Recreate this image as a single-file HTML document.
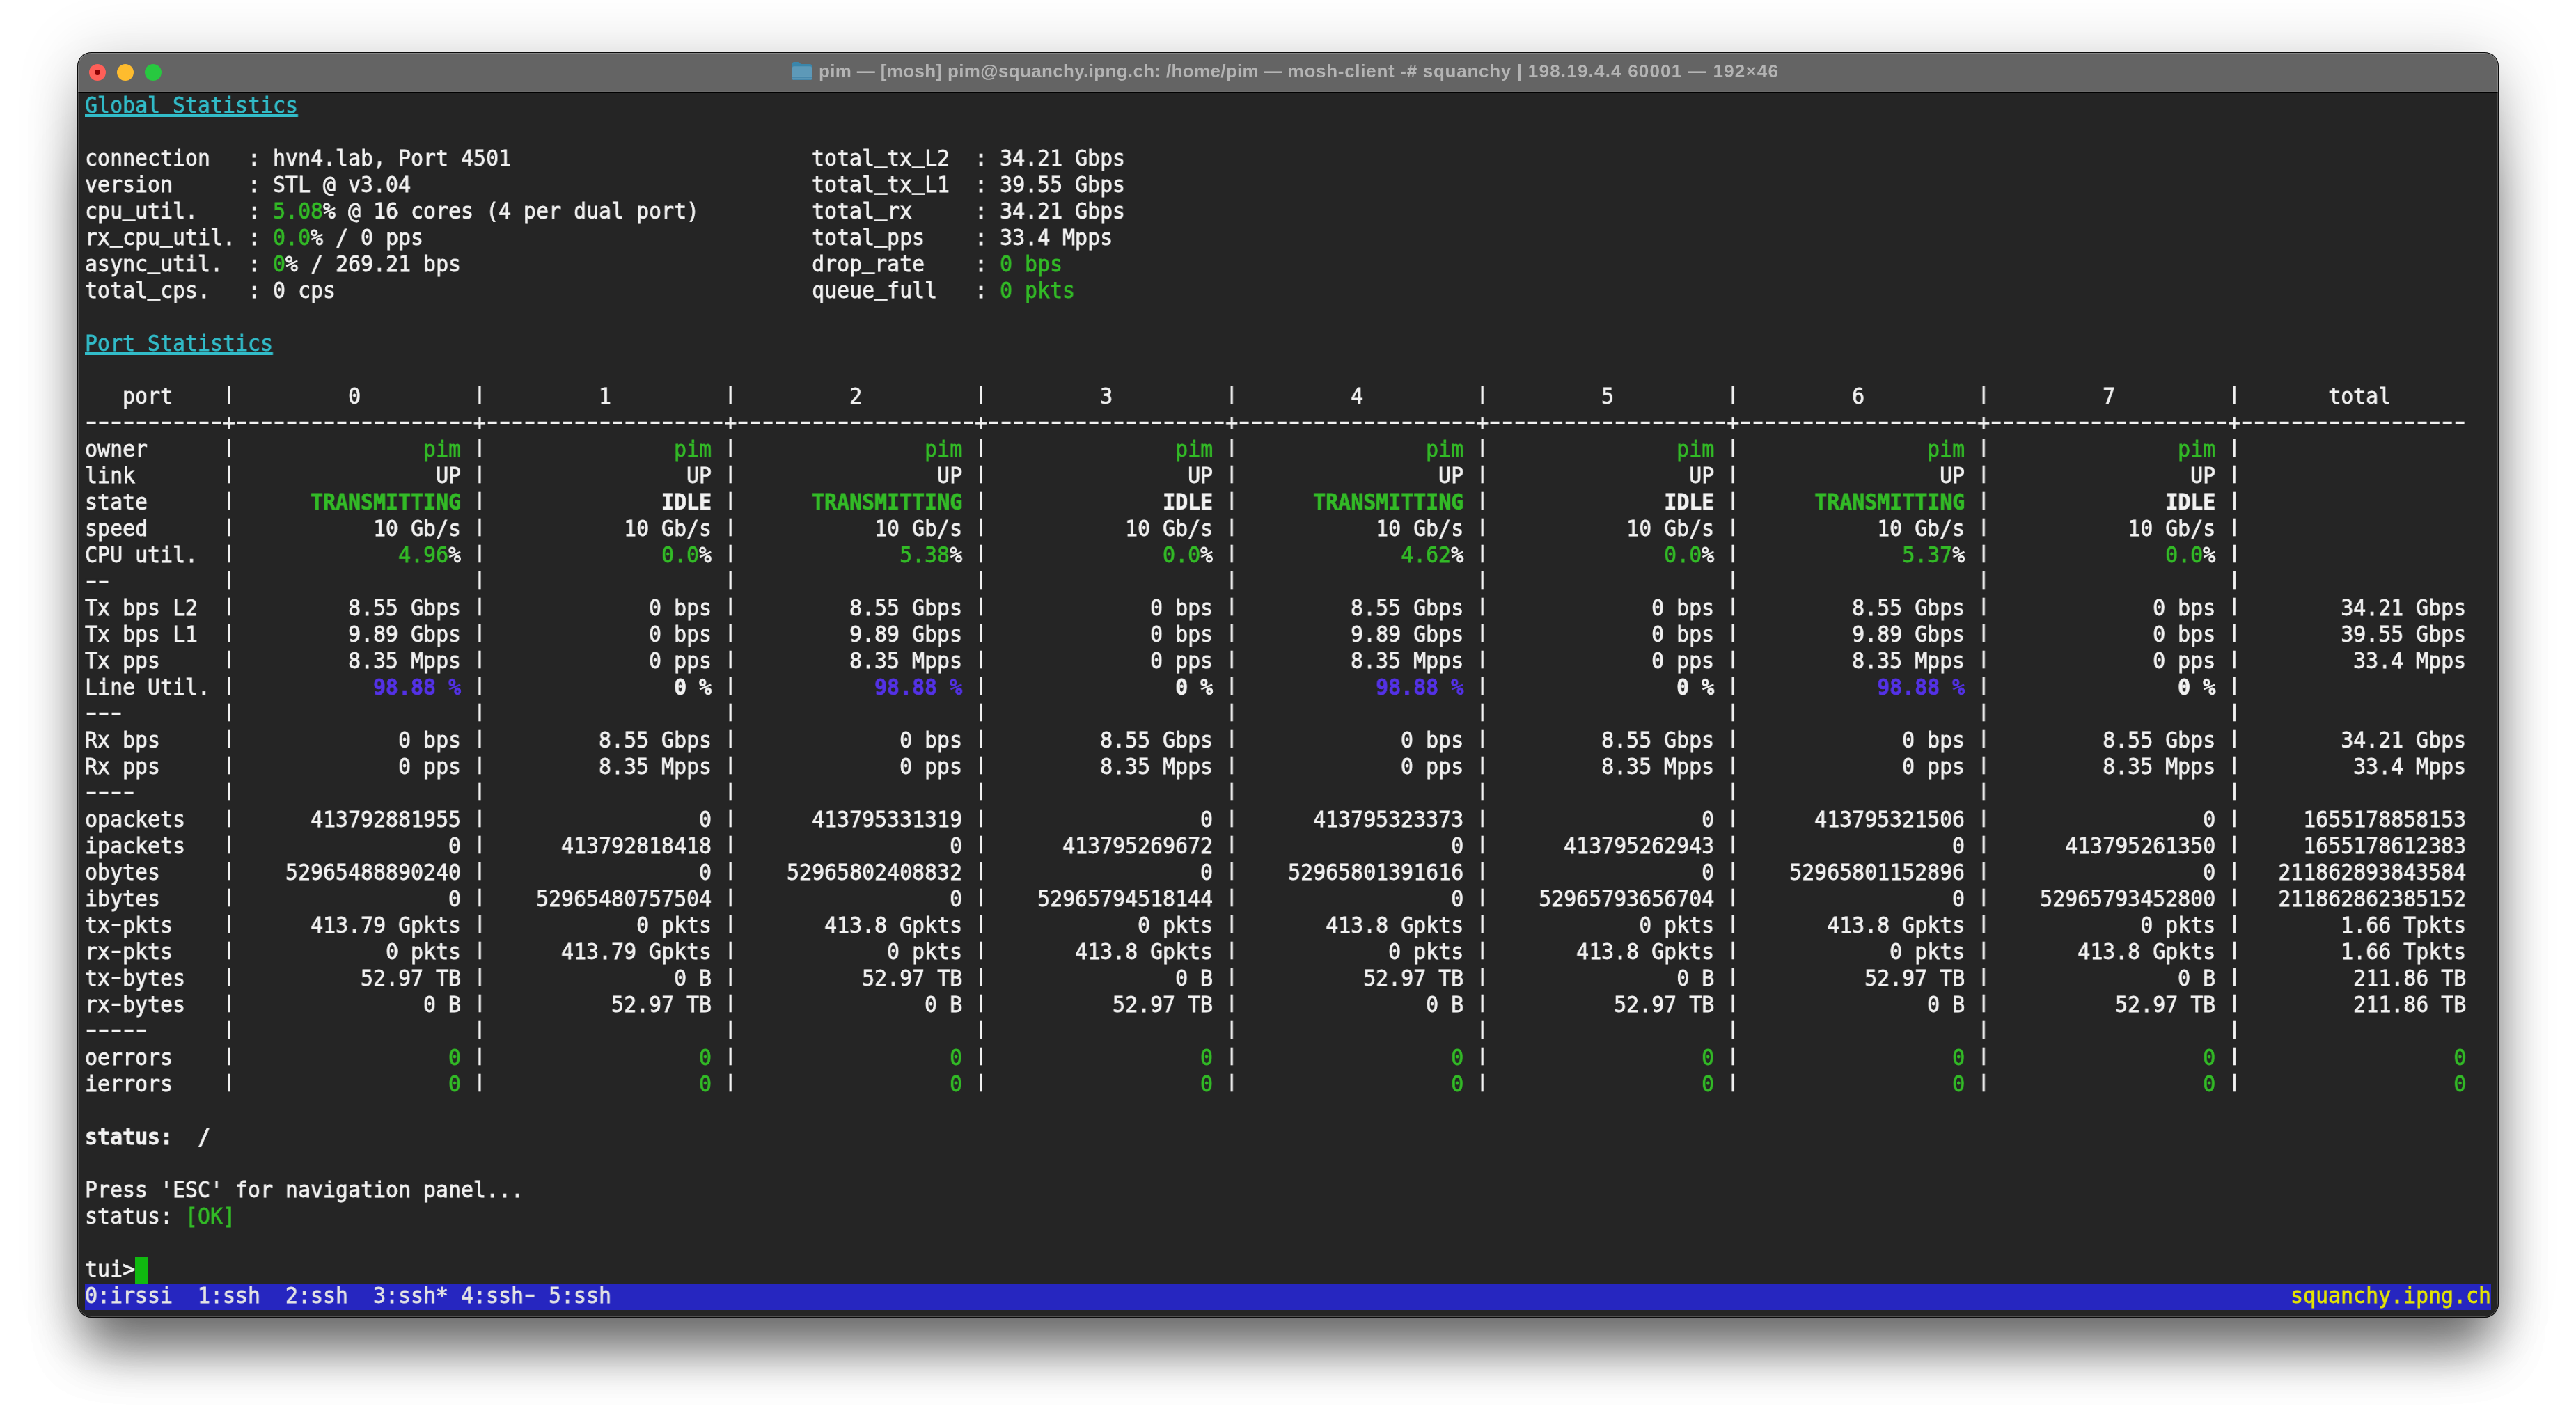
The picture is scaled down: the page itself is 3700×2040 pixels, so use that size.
<!DOCTYPE html>
<html lang="en"><head><meta charset="utf-8"><title>trex tui</title>
<style>
html,body{margin:0;padding:0;}
body{width:3700px;height:2040px;background:#fff;position:relative;overflow:hidden;}
#shadow{position:absolute;left:111px;top:75px;width:3478px;height:1818px;border-radius:20px;
  box-shadow:0 0 90px 0 rgba(0,0,0,.15);}
#k1,#k2{position:absolute;left:123px;width:3454px;border-radius:20px;box-shadow:0 50px 76px 0 rgba(0,0,0,.34);}
#k1{top:80px;height:1805px;} #k2{top:180px;height:1705px;}
#win{position:absolute;left:111px;top:75px;width:3478px;height:1818px;border-radius:20px;
  background:#252525;overflow:hidden;box-sizing:border-box;}
#edge{position:absolute;left:0;top:0;right:0;bottom:0;border-radius:20px;border:1px solid #0a0a0a;
  box-shadow:inset 0 0 0 1px rgba(255,255,255,.20);box-sizing:border-box;z-index:5;pointer-events:none;}
#tbar{position:absolute;left:0;top:0;width:100%;height:57px;background:#646464;border-bottom:1px solid #000;box-shadow:inset 0 -1px 0 #6b6b6b;}
#tbar i{position:absolute;top:17px;width:24px;height:24px;border-radius:50%;display:block;}
#r{left:17px;background:#fe5f58;} #y{left:57px;background:#febc2e;} #g{left:97px;background:#28c840;}
#r::after{content:"";position:absolute;left:8px;top:8px;width:8px;height:8px;border-radius:50%;background:#8c0003;}
#title{position:absolute;left:1065px;will-change:transform;top:0;height:56px;line-height:55px;white-space:pre;
  font:bold 26px/55px "Liberation Sans",sans-serif;color:#b4b4b4;}
#folder{position:absolute;left:1026px;top:13px;width:30px;height:28px;}
#bar{position:absolute;left:11px;top:1769px;width:3456px;height:38px;background:#2626c0;}
#cur{position:absolute;left:83px;top:1731px;width:18px;height:38px;background:#10b910;}
#term{position:absolute;left:11px;top:57px;margin:0;width:3816.8px;
  font-family:"DejaVu Sans Mono", "Liberation Mono", monospace;font-size:32.5px;line-height:38px;letter-spacing:0;color:#f2f2f2;white-space:pre;
  font-variant-ligatures:none;font-kerning:none;-webkit-text-stroke:0.8px;will-change:transform;
  transform:scaleX(0.919934);transform-origin:0 0;}
.g{color:#33bb27;} .c{color:#32bcc9;} .bl{color:#5432e6;} .y{color:#e5e500;} .s{color:#e4e4e4;}
.b{font-weight:bold;}
#term i{font-style:normal;display:inline-block;transform:translateY(-3.9px) scaleY(0.766);}
#term s{text-decoration:none;position:relative;top:-4.3px;-webkit-text-stroke:1.3px;}
#term u{text-decoration:none;font-size:63.38px;letter-spacing:-18.5883px;line-height:0;-webkit-text-stroke:2px #252525;position:relative;top:6.7px;left:-9.294px;}
#term .s u{-webkit-text-stroke:2px #2626c0;}
.u{text-decoration:underline;text-decoration-thickness:4px;text-underline-offset:2px;text-decoration-skip-ink:none;}
</style></head>
<body>
<div id="shadow"></div><div id="k1"></div><div id="k2"></div>
<div id="win">
<div id="tbar"><i id="r"></i><i id="y"></i><i id="g"></i><svg id="folder" viewBox="0 0 30 28">
<path d="M1 3.5Q1 1 3.5 1H9Q10.3 1 11.3 1.9L13.5 4H26.5Q29 4 29 6.5V24.5Q29 27 26.5 27H3.5Q1 27 1 24.5Z" fill="#3a86ab"/>
<path d="M1 9.5Q1 7.3 3.2 7.3H26.8Q29 7.3 29 9.5V24.5Q29 27 26.5 27H3.5Q1 27 1 24.5Z" fill="#5d99b8"/>
<path d="M1 21.6H29V24.5Q29 27 26.5 27H3.5Q1 27 1 24.5Z" fill="#4888ab"/>
<rect x="1" y="21.4" width="28" height=".9" fill="#6aa2be"/>
<rect x="1" y="24" width="28" height=".9" fill="#5c98b7"/>
</svg><div id="title"><span style="letter-spacing:.34px">pim — [mosh] pim@squanchy.ipng.ch: /home/pim — </span><span style="letter-spacing:.72px">mosh-client -# squanchy | </span><span style="letter-spacing:1.2px">198.19.4.4 60001 — 192×46</span></div></div>
<div id="bar"></div><div id="cur"></div>
<pre id="term"><span class="c u">Global Statistics</span>

connection   : hvn4.lab, Port 4501                        total<s>_</s>tx<s>_</s>L2  : 34.21 Gbps
version      : STL @ v3.04                                total<s>_</s>tx<s>_</s>L1  : 39.55 Gbps
cpu<s>_</s>util.    : <span class="g">5.08</span>% @ 16 cores (4 per dual port)         total<s>_</s>rx     : 34.21 Gbps
rx<s>_</s>cpu<s>_</s>util. : <span class="g">0.0</span>% / 0 pps                               total<s>_</s>pps    : 33.4 Mpps
async<s>_</s>util.  : <span class="g">0</span>% / 269.21 bps                            drop<s>_</s>rate    : <span class="g">0 bps</span>
total<s>_</s>cps.   : 0 cps                                      queue<s>_</s>full   : <span class="g">0 pkts</span>

<span class="c u">Port Statistics</span>

   port    <i>|</i>         0         <i>|</i>         1         <i>|</i>         2         <i>|</i>         3         <i>|</i>         4         <i>|</i>         5         <i>|</i>         6         <i>|</i>         7         <i>|</i>       total
<u>-----------</u>+<u>-------------------</u>+<u>-------------------</u>+<u>-------------------</u>+<u>-------------------</u>+<u>-------------------</u>+<u>-------------------</u>+<u>-------------------</u>+<u>-------------------</u>+<u>------------------</u>
owner      <i>|</i>               <span class="g">pim</span> <i>|</i>               <span class="g">pim</span> <i>|</i>               <span class="g">pim</span> <i>|</i>               <span class="g">pim</span> <i>|</i>               <span class="g">pim</span> <i>|</i>               <span class="g">pim</span> <i>|</i>               <span class="g">pim</span> <i>|</i>               <span class="g">pim</span> <i>|</i>
link       <i>|</i>                UP <i>|</i>                UP <i>|</i>                UP <i>|</i>                UP <i>|</i>                UP <i>|</i>                UP <i>|</i>                UP <i>|</i>                UP <i>|</i>
state      <i>|</i>      <span class="g b">TRANSMITTING</span> <i>|</i>              <span class="b">IDLE</span> <i>|</i>      <span class="g b">TRANSMITTING</span> <i>|</i>              <span class="b">IDLE</span> <i>|</i>      <span class="g b">TRANSMITTING</span> <i>|</i>              <span class="b">IDLE</span> <i>|</i>      <span class="g b">TRANSMITTING</span> <i>|</i>              <span class="b">IDLE</span> <i>|</i>
speed      <i>|</i>           10 Gb/s <i>|</i>           10 Gb/s <i>|</i>           10 Gb/s <i>|</i>           10 Gb/s <i>|</i>           10 Gb/s <i>|</i>           10 Gb/s <i>|</i>           10 Gb/s <i>|</i>           10 Gb/s <i>|</i>
CPU util.  <i>|</i>             <span class="g">4.96</span>% <i>|</i>              <span class="g">0.0</span>% <i>|</i>             <span class="g">5.38</span>% <i>|</i>              <span class="g">0.0</span>% <i>|</i>             <span class="g">4.62</span>% <i>|</i>              <span class="g">0.0</span>% <i>|</i>             <span class="g">5.37</span>% <i>|</i>              <span class="g">0.0</span>% <i>|</i>
<u>--</u>         <i>|</i>                   <i>|</i>                   <i>|</i>                   <i>|</i>                   <i>|</i>                   <i>|</i>                   <i>|</i>                   <i>|</i>                   <i>|</i>
Tx bps L2  <i>|</i>         8.55 Gbps <i>|</i>             0 bps <i>|</i>         8.55 Gbps <i>|</i>             0 bps <i>|</i>         8.55 Gbps <i>|</i>             0 bps <i>|</i>         8.55 Gbps <i>|</i>             0 bps <i>|</i>        34.21 Gbps
Tx bps L1  <i>|</i>         9.89 Gbps <i>|</i>             0 bps <i>|</i>         9.89 Gbps <i>|</i>             0 bps <i>|</i>         9.89 Gbps <i>|</i>             0 bps <i>|</i>         9.89 Gbps <i>|</i>             0 bps <i>|</i>        39.55 Gbps
Tx pps     <i>|</i>         8.35 Mpps <i>|</i>             0 pps <i>|</i>         8.35 Mpps <i>|</i>             0 pps <i>|</i>         8.35 Mpps <i>|</i>             0 pps <i>|</i>         8.35 Mpps <i>|</i>             0 pps <i>|</i>         33.4 Mpps
Line Util. <i>|</i>           <span class="bl b">98.88 %</span> <i>|</i>               <span class="b">0 %</span> <i>|</i>           <span class="bl b">98.88 %</span> <i>|</i>               <span class="b">0 %</span> <i>|</i>           <span class="bl b">98.88 %</span> <i>|</i>               <span class="b">0 %</span> <i>|</i>           <span class="bl b">98.88 %</span> <i>|</i>               <span class="b">0 %</span> <i>|</i>
<u>---</u>        <i>|</i>                   <i>|</i>                   <i>|</i>                   <i>|</i>                   <i>|</i>                   <i>|</i>                   <i>|</i>                   <i>|</i>                   <i>|</i>
Rx bps     <i>|</i>             0 bps <i>|</i>         8.55 Gbps <i>|</i>             0 bps <i>|</i>         8.55 Gbps <i>|</i>             0 bps <i>|</i>         8.55 Gbps <i>|</i>             0 bps <i>|</i>         8.55 Gbps <i>|</i>        34.21 Gbps
Rx pps     <i>|</i>             0 pps <i>|</i>         8.35 Mpps <i>|</i>             0 pps <i>|</i>         8.35 Mpps <i>|</i>             0 pps <i>|</i>         8.35 Mpps <i>|</i>             0 pps <i>|</i>         8.35 Mpps <i>|</i>         33.4 Mpps
<u>----</u>       <i>|</i>                   <i>|</i>                   <i>|</i>                   <i>|</i>                   <i>|</i>                   <i>|</i>                   <i>|</i>                   <i>|</i>                   <i>|</i>
opackets   <i>|</i>      413792881955 <i>|</i>                 0 <i>|</i>      413795331319 <i>|</i>                 0 <i>|</i>      413795323373 <i>|</i>                 0 <i>|</i>      413795321506 <i>|</i>                 0 <i>|</i>     1655178858153
ipackets   <i>|</i>                 0 <i>|</i>      413792818418 <i>|</i>                 0 <i>|</i>      413795269672 <i>|</i>                 0 <i>|</i>      413795262943 <i>|</i>                 0 <i>|</i>      413795261350 <i>|</i>     1655178612383
obytes     <i>|</i>    52965488890240 <i>|</i>                 0 <i>|</i>    52965802408832 <i>|</i>                 0 <i>|</i>    52965801391616 <i>|</i>                 0 <i>|</i>    52965801152896 <i>|</i>                 0 <i>|</i>   211862893843584
ibytes     <i>|</i>                 0 <i>|</i>    52965480757504 <i>|</i>                 0 <i>|</i>    52965794518144 <i>|</i>                 0 <i>|</i>    52965793656704 <i>|</i>                 0 <i>|</i>    52965793452800 <i>|</i>   211862862385152
tx<u>-</u>pkts    <i>|</i>      413.79 Gpkts <i>|</i>            0 pkts <i>|</i>       413.8 Gpkts <i>|</i>            0 pkts <i>|</i>       413.8 Gpkts <i>|</i>            0 pkts <i>|</i>       413.8 Gpkts <i>|</i>            0 pkts <i>|</i>        1.66 Tpkts
rx<u>-</u>pkts    <i>|</i>            0 pkts <i>|</i>      413.79 Gpkts <i>|</i>            0 pkts <i>|</i>       413.8 Gpkts <i>|</i>            0 pkts <i>|</i>       413.8 Gpkts <i>|</i>            0 pkts <i>|</i>       413.8 Gpkts <i>|</i>        1.66 Tpkts
tx<u>-</u>bytes   <i>|</i>          52.97 TB <i>|</i>               0 B <i>|</i>          52.97 TB <i>|</i>               0 B <i>|</i>          52.97 TB <i>|</i>               0 B <i>|</i>          52.97 TB <i>|</i>               0 B <i>|</i>         211.86 TB
rx<u>-</u>bytes   <i>|</i>               0 B <i>|</i>          52.97 TB <i>|</i>               0 B <i>|</i>          52.97 TB <i>|</i>               0 B <i>|</i>          52.97 TB <i>|</i>               0 B <i>|</i>          52.97 TB <i>|</i>         211.86 TB
<u>-----</u>      <i>|</i>                   <i>|</i>                   <i>|</i>                   <i>|</i>                   <i>|</i>                   <i>|</i>                   <i>|</i>                   <i>|</i>                   <i>|</i>
oerrors    <i>|</i>                 <span class="g">0</span> <i>|</i>                 <span class="g">0</span> <i>|</i>                 <span class="g">0</span> <i>|</i>                 <span class="g">0</span> <i>|</i>                 <span class="g">0</span> <i>|</i>                 <span class="g">0</span> <i>|</i>                 <span class="g">0</span> <i>|</i>                 <span class="g">0</span> <i>|</i>                 <span class="g">0</span>
ierrors    <i>|</i>                 <span class="g">0</span> <i>|</i>                 <span class="g">0</span> <i>|</i>                 <span class="g">0</span> <i>|</i>                 <span class="g">0</span> <i>|</i>                 <span class="g">0</span> <i>|</i>                 <span class="g">0</span> <i>|</i>                 <span class="g">0</span> <i>|</i>                 <span class="g">0</span> <i>|</i>                 <span class="g">0</span>

<span class="b">status:  /</span>

Press 'ESC' for navigation panel...
status: <span class="g">[OK]</span>

tui&gt;
<span class="s">0:irssi  1:ssh  2:ssh  3:ssh* 4:ssh<u>-</u> 5:ssh</span>                                                                                                                                      <span class="y">squanchy.ipng.ch</span></pre>
<div id="edge"></div>
</div>
</body></html>
